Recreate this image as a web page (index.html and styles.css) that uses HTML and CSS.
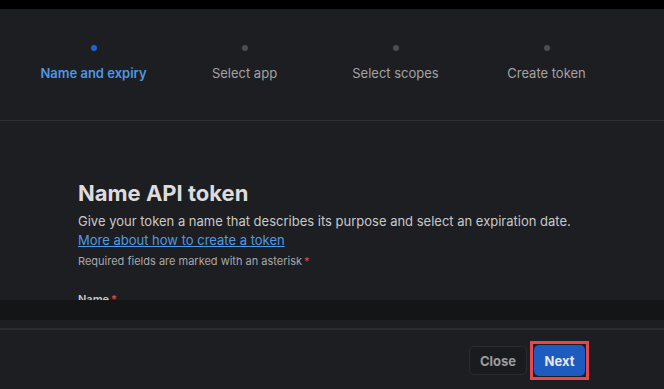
FILE: index.html
```html
<!DOCTYPE html>
<html lang="en">

<head>
    <meta charset="UTF-8">
    <meta name="viewport" content="width=device-width, initial-scale=1.0">
    <title>Create API token</title>
    <link rel="stylesheet" href="styles.css">
</head>

<body>
    <div class="topbar"></div>

    <div class="modal">
        <div class="stepper">
            <div class="step active">
                <span class="dot"></span>
                <span class="step-label">Name and expiry</span>
            </div>
            <div class="step">
                <span class="dot"></span>
                <span class="step-label">Select app</span>
            </div>
            <div class="step">
                <span class="dot"></span>
                <span class="step-label">Select scopes</span>
            </div>
            <div class="step">
                <span class="dot"></span>
                <span class="step-label">Create token</span>
            </div>
        </div>

        <div class="modal-body">
            <h1>Name API token</h1>
            <p class="desc">Give your token a name that describes its purpose and select an expiration date.</p>
            <a href="#" class="link">More about how to create a token</a>
            <p class="required">Required fields are marked with an asterisk<span class="star">*</span></p>
            <label class="field-label">Name<span class="star">*</span></label>
        </div>

        <div class="band"></div>

        <div class="footer">
            <button class="btn btn-close">Close</button>
            <span class="highlight">
                <button class="btn btn-next">Next</button>
            </span>
        </div>
    </div>
</body>

</html>
```

FILE: styles.css
```css
body {
    margin: 0;
    background: #000;
    font-family: Inter, "Noto Sans", sans-serif;
    overflow: hidden;
}

.topbar {
    height: 9px;
    background: #000;
}

.modal {
    background: #1d1e21;
    height: 380px;
}

/* stepper */
.stepper {
    display: grid;
    grid-template-columns: repeat(4, 151px);
    padding: 36px 0 0 18px;
    height: 75px;
    border-bottom: 1px solid #2e2f33;
}

.step {
    display: flex;
    flex-direction: column;
    align-items: center;
    gap: 14px;
}

.dot {
    width: 6px;
    height: 6px;
    border-radius: 50%;
    background: #4b4d52;
}

.step-label {
    font-size: 13px;
    color: #a3a3a3;
    line-height: 16px;
}

.step.active .dot {
    background: #1f63d6;
}

.step.active .step-label {
    color: #4f96e0;
    font-weight: 600;
}

/* body */
.modal-body {
    height: 121px;
    padding: 58px 0 0 78px;
    overflow: hidden;
}

h1 {
    margin: 0 0 5px;
    font-size: 22px;
    line-height: 28px;
    font-weight: 700;
    color: #dcdcdc;
}

.desc {
    margin: 0;
    font-size: 13px;
    line-height: 19px;
    color: #c9c9c9;
}

.link {
    display: block;
    font-size: 13px;
    line-height: 19px;
    color: #4f9ae6;
    text-decoration: underline;
}

.required {
    margin: 3px 0 0;
    font-size: 11px;
    line-height: 16px;
    color: #a8a8a8;
}

.star {
    color: #e5484d;
    margin-left: 2px;
}

.field-label {
    display: block;
    margin-top: 23px;
    font-size: 11px;
    font-weight: 600;
    color: #c8c8c8;
}

.band {
    height: 20px;
    background: #141517;
    margin-bottom: 8px;
}

/* footer */
.footer {
    border-top: 2px solid #2b2c30;
    display: flex;
    justify-content: flex-end;
    align-items: center;
    gap: 3px;
    padding: 11px 75px 0 0;
}

.btn {
    font-family: inherit;
    font-size: 13px;
    font-weight: 700;
    border-radius: 5px;
    cursor: pointer;
}

.btn-close {
    width: 58px;
    height: 29px;
    background: #1a1b1e;
    border: 1px solid #2a2b2f;
    color: #9b9b9b;
}

.highlight {
    display: flex;
    border: 3px solid #e5484d;
    padding: 1px;
}

.btn-next {
    width: 51px;
    height: 31px;
    background: #1d5bc0;
    border: none;
    color: #e8e8e8;
}
```
